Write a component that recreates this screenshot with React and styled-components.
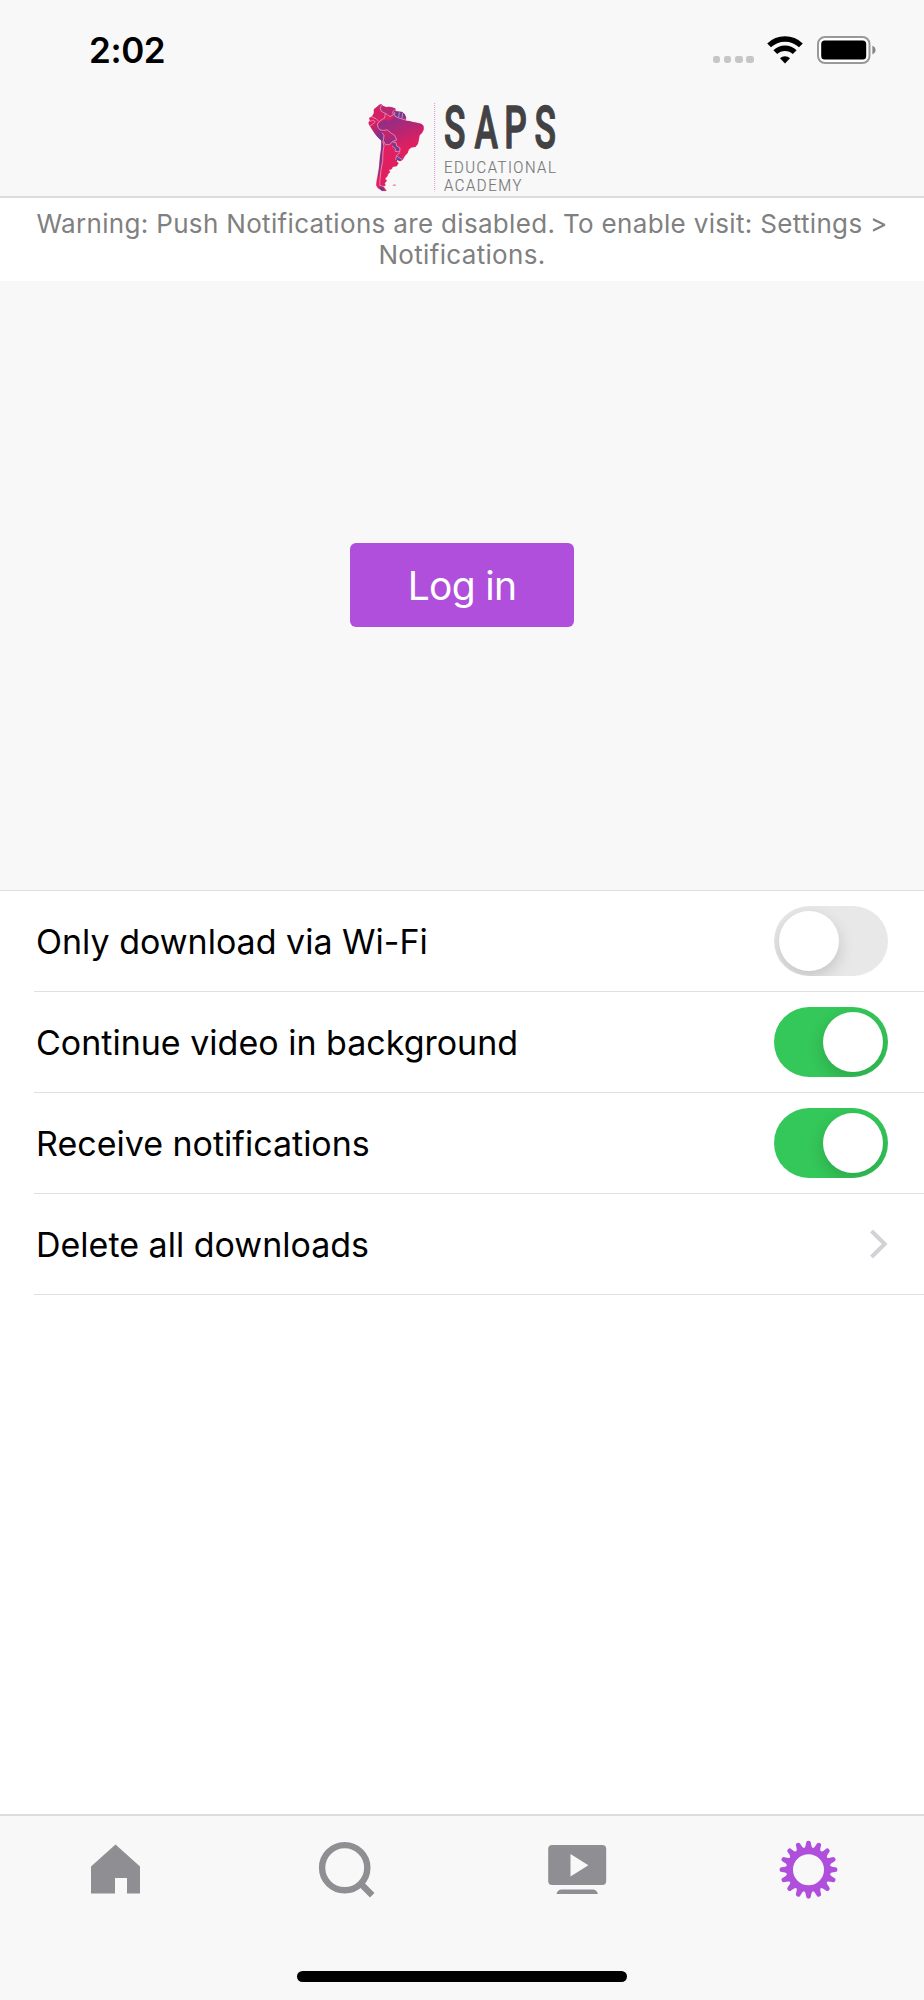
import React, { useState } from "react";
import styled, { createGlobalStyle } from "styled-components";

const GlobalStyle = createGlobalStyle`
  *, *::before, *::after { box-sizing: border-box; }
  body {
    margin: 0;
    background: #fff;
    font-family: Inter, "Liberation Sans", sans-serif;
    color: #000;
  }
  button { font: inherit; border: 0; padding: 0; background: none; cursor: pointer; }
  svg { display: block; }
`;

const Screen = styled.main`
  display: flex;
  flex-direction: column;
  width: 924px;
  height: 2000px;
  background: #fff;
  overflow: hidden;
`;

const Header = styled.header`
  height: 198px;
  flex: none;
  background: #f8f8f8;
  border-bottom: 2px solid #dcdcdc;
`;

const StatusBar = styled.div`
  display: flex;
  justify-content: space-between;
  height: 90px;
  padding: 30px 48px 0 89px;
`;

const Clock = styled.time`
  font-size: 35px;
  font-weight: 600;
  line-height: 41px;
  letter-spacing: -0.4px;
`;

const StatusIcons = styled.div`
  display: flex;
  align-items: flex-end;
  height: 34px;
`;

const SignalDots = styled.div`
  display: flex;
  gap: 3.6px;
  margin: 0 13.4px 1px 0;

  i {
    width: 7.5px;
    height: 7.5px;
    border-radius: 2.4px;
    background: #c6c6c6;
  }
`;

const BatterySlot = styled.div`
  margin-left: 14px;
`;

const LogoSlot = styled.div`
  padding-left: 350px;
`;

const Warning = styled.p`
  flex: none;
  height: 83px;
  margin: 0;
  padding: 10px 20px 0;
  font-size: 26px;
  line-height: 31px;
  letter-spacing: 0.33px;
  text-align: center;
  color: #808080;
`;

const LoginPanel = styled.section`
  flex: none;
  display: flex;
  align-items: center;
  justify-content: center;
  height: 610px;
  padding-bottom: 1px;
  background: #f8f8f8;
  border-bottom: 1px solid #dedede;
`;

const LoginButton = styled.button`
  && {
    width: 224px;
    height: 84px;
    border-radius: 6px;
    background: #af4fdb;
    color: #fff;
    font-size: 39px;
    font-weight: 380;
    letter-spacing: -0.7px;
  }
`;

const Settings = styled.section`
  flex: 1;
  padding-left: 34px;
`;

const Row = styled.div`
  display: flex;
  align-items: center;
  justify-content: space-between;
  height: 101px;
  padding: 0 36px 0 2px;
  border-bottom: 1px solid #e0e0e0;
  font-size: 34px;
`;

const Switch = styled.button`
  && {
    width: 114px;
    height: 70px;
    padding: 5px;
    border-radius: 35px;
    overflow: hidden;
    background: ${(p) => (p.$on ? "#34c759" : "#e8e8e8")};
    display: flex;
    justify-content: ${(p) => (p.$on ? "flex-end" : "flex-start")};
  }
`;

const Knob = styled.span`
  width: 60px;
  height: 60px;
  border-radius: 50%;
  background: #fff;
  box-shadow: 0 6px 16px rgba(0, 0, 0, 0.16);
`;

const TabBar = styled.nav`
  flex: none;
  height: 186px;
  background: #f8f8f8;
  border-top: 2px solid #dcdcdc;
`;

const Tabs = styled.div`
  display: grid;
  grid-template-columns: repeat(4, 1fr);
  justify-items: center;
  height: 155px;
  padding-top: 22px;
`;

const Tab = styled.button`
  && {
    width: 64px;
    height: 64px;
    color: ${(p) => (p.$active ? "#af4fdb" : "#8e8e93")};
  }
`;

const HomeIndicator = styled.div`
  width: 330px;
  height: 11px;
  margin: 0 auto;
  border-radius: 6px;
  background: #000;
`;

const SOUTH_AMERICA =
  "M50 28L58 21 64 19 68 24 78 28 88 27 98 29 106 32 106 40 116 41 126 42 134 49 138 60 136 68 148 70 160 73 172 75 184 78 190 84 191 94 186 104 178 112 176 124 173 138 166 146 154 148 146 154 142 165 134 174 127 186 120 189 112 185 110 190 115 196 110 204 98 206 95 213 86 216 90 222 84 228 82 234 75 242 80 248 74 256 76 262 70 266 76 274 79 278 66 278 54 270 49 262 51 245 55 225 58 205 60 180 64 150 65 128 54 118 46 108 38 96 28 80 26 74 30 68 28 60 36 56 42 46 42 34z";

const Logo = () => (
  <svg width="220" height="106" viewBox="0 0 660 318" role="img" aria-label="SAPS Educational Academy">
    <defs>
      <linearGradient id="brazil" x1="90" y1="55" x2="130" y2="150" gradientUnits="userSpaceOnUse">
        <stop offset="0" stopColor="#8a3089" />
        <stop offset="0.5" stopColor="#b52674" />
        <stop offset="1" stopColor="#df1f5f" />
      </linearGradient>
      <linearGradient id="andes" x1="40" y1="80" x2="70" y2="125" gradientUnits="userSpaceOnUse">
        <stop offset="0" stopColor="#d32065" />
        <stop offset="1" stopColor="#5f3a97" />
      </linearGradient>
      <linearGradient id="bolivia" x1="72" y1="95" x2="100" y2="140" gradientUnits="userSpaceOnUse">
        <stop offset="0" stopColor="#d82062" />
        <stop offset="1" stopColor="#8b3189" />
      </linearGradient>
      <clipPath id="coast">
        <path d={SOUTH_AMERICA} />
      </clipPath>
    </defs>
    <g transform="translate(30 24)">
      <path d={SOUTH_AMERICA} fill="#df1f5f" stroke="#df1f5f" strokeWidth="1.5" strokeLinejoin="round" />
      <g clipPath="url(#coast)">
        <path d="M54 78L72 66 88 68 104 56 136 66 192 80 180 120 166 150 142 168 120 176 112 150 106 126 72 98 56 92z" fill="url(#brazil)" />
        <path d="M24 76L36 74 50 70 54 84 58 96 70 98 72 110 66 136 50 118z" fill="url(#andes)" />
        <path d="M40 40L52 24 62 18 60 34 74 44 72 62 56 72 38 62z" fill="#d42064" />
        <path d="M62 18L70 24 106 28 104 42 96 52 84 58 74 44 58 36z" fill="#b92873" />
        <path d="M100 38L116 40 136 46 138 62 116 60 104 54z" fill="#74398f" />
        <path d="M70 98L82 96 94 106 106 114 108 126 96 132 88 140 74 140 68 122z" fill="url(#bolivia)" />
        <path d="M100 132L108 134 110 144 120 150 118 162 106 156 96 142z" fill="#7d3690" />
        <path d="M108 176L118 174 126 182 120 190 108 188z" fill="#74398f" />
        <path d="M64 126L70 140 67 160 65 190 60 215 56 240 55 225 58 200z" fill="#693b96" />
        <path d="M60 266L66 264 76 280 64 280z" fill="#633a96" />
      </g>
      <g fill="none" stroke="#f0c3d9" strokeWidth="1.8" strokeLinejoin="round">
        <path d="M66 20L60 30 64 40 76 46 74 60 60 68 52 78 54 88 60 96 70 97M76 46L90 56 100 50 98 42 106 34M104 42L104 54 114 59 136 66M118 43L116 58M128 45L126 61M36 57L48 62 56 70M30 70L40 66 46 72 36 80 30 84" />
        <path d="M70 97L82 96 94 106 104 112 110 126 98 130 88 140 76 140 70 128 72 112 66 104M98 132L108 134 110 144 120 150 119 162 106 160 106 152 96 144M119 164L109 174 107 186M109 174L126 184" />
        <path d="M68 130L72 144 69 162 68 190 63 215 60 245 59 262 72 266" />
      </g>
      <path d="M97 261L103 259 109 261 106 264 99 263z" fill="#f28c94" />
    </g>
    <path d="M254 39V304" fill="none" stroke="#d996cc" strokeWidth="3" strokeDasharray="3 3" />
    <g transform="translate(0 174) scale(0.6 1)" stroke="#424244" strokeWidth="4" strokeLinejoin="round">
      <text x="470 623 771 922" fontFamily="Roboto, sans-serif" fontWeight="550" fontSize="177" fill="#424244">
        SAPS
      </text>
    </g>
    <g fontFamily="Roboto, sans-serif" fontWeight="300" fontSize="52" fill="#78787b" stroke="#78787b" strokeWidth="0.6">
      <text x="0" y="0" transform="translate(282 250) scale(0.86 1)" textLength="390">EDUCATIONAL</text>
      <text x="0" y="0" transform="translate(282 302) scale(0.86 1)" textLength="270">ACADEMY</text>
    </g>
  </svg>
);

const Wifi = () => (
  <svg width="36" height="28" viewBox="0 0 36 28">
    <g fill="none" stroke="#000" strokeWidth="5.4">
      <path d="M2.1 9.4A23 23 0 0 1 33.9 9.4" />
      <path d="M8.3 16.2A13.8 13.8 0 0 1 27.7 16.2" />
    </g>
    <path d="M18 27.4l-5-5.2a7.2 7.2 0 0 1 10 0z" />
  </svg>
);

const Battery = () => (
  <svg width="59" height="28" viewBox="0 0 59 28">
    <rect x="1" y="1" width="51.5" height="26" rx="7" fill="#fff" stroke="#999" strokeWidth="2" />
    <rect x="4.2" y="4.5" width="45" height="19" rx="3.5" />
    <path d="M55.4 9.8c4.2 1.6 4.2 7 0 8.4z" fill="#858585" />
  </svg>
);

const Chevron = () => (
  <svg width="19" height="30" viewBox="0 0 19 30">
    <path d="M2.5 2L15.7 15 2.5 28" fill="none" stroke="#d1d1d6" strokeWidth="4" />
  </svg>
);

const HomeIcon = () => (
  <svg width="64" height="64" viewBox="0 0 64 64" fill="currentColor">
    <path d="M31.5 6.5L56 28.5V55.5H43V40H31V55.5H7V28.5z" />
  </svg>
);

const SearchIcon = () => (
  <svg width="64" height="64" viewBox="0 0 64 64" fill="none" stroke="currentColor" strokeWidth="6.4">
    <circle cx="29.7" cy="29.7" r="22.6" />
    <path d="M45.6 45.6L57.2 57.2" />
  </svg>
);

const VideoIcon = () => (
  <svg width="64" height="64" viewBox="0.8 0 64 64" fill="currentColor">
    <path
      fillRule="evenodd"
      d="M7 7h50a4 4 0 0 1 4 4v32a4 4 0 0 1-4 4H7a4 4 0 0 1-4-4V11a4 4 0 0 1 4-4zM25.3 16v22.4L43.2 27.2z"
    />
    <path d="M11.3 56q1.2-4.6 5-4.6h31.4q3.8 0 5 4.6z" />
  </svg>
);

const GearIcon = () => (
  <svg width="64" height="64" viewBox="-31.5 -31.7 64 64" fill="currentColor">
    <circle r="18.8" fill="none" stroke="currentColor" strokeWidth="6.6" />
    {Array.from({ length: 16 }, (_, i) => (
      <path
        key={i}
        transform={`rotate(${i * 22.5})`}
        d="M-4.4-21Q-2.6-22.8-2.4-26.6A2.4 2.4 0 0 1 2.4-26.6Q2.6-22.8 4.4-21z"
      />
    ))}
  </svg>
);

const OPTIONS = [
  { id: "wifi", label: "Only download via Wi-Fi", on: false },
  { id: "background", label: "Continue video in background", on: true },
  { id: "notifications", label: "Receive notifications", on: true },
];

const TABS = [
  { id: "Home", Icon: HomeIcon },
  { id: "Search", Icon: SearchIcon },
  { id: "Videos", Icon: VideoIcon },
  { id: "Settings", Icon: GearIcon },
];

export default function App() {
  const [values, setValues] = useState(OPTIONS.map((o) => o.on));
  const [active, setActive] = useState("Settings");
  const toggle = (index) => setValues(values.map((v, i) => (i === index ? !v : v)));

  return (
    <Screen>
      <GlobalStyle />
      <Header>
        <StatusBar>
          <Clock>2:02</Clock>
          <StatusIcons>
            <SignalDots><i /><i /><i /><i /></SignalDots>
            <Wifi />
            <BatterySlot><Battery /></BatterySlot>
          </StatusIcons>
        </StatusBar>
        <LogoSlot><Logo /></LogoSlot>
      </Header>
      <Warning>
        Warning: Push Notifications are disabled. To enable visit: Settings &gt; Notifications.
      </Warning>
      <LoginPanel>
        <LoginButton>Log in</LoginButton>
      </LoginPanel>
      <Settings>
        {OPTIONS.map((o, i) => (
          <Row key={o.id}>
            {o.label}
            <Switch role="switch" aria-label={o.label} aria-checked={values[i]} $on={values[i]} onClick={() => toggle(i)}>
              <Knob />
            </Switch>
          </Row>
        ))}
        <Row>
          Delete all downloads
          <Chevron />
        </Row>
      </Settings>
      <TabBar>
        <Tabs>
          {TABS.map(({ id, Icon }) => (
            <Tab key={id} aria-label={id} $active={active === id} onClick={() => setActive(id)}>
              <Icon />
            </Tab>
          ))}
        </Tabs>
        <HomeIndicator />
      </TabBar>
    </Screen>
  );
}
